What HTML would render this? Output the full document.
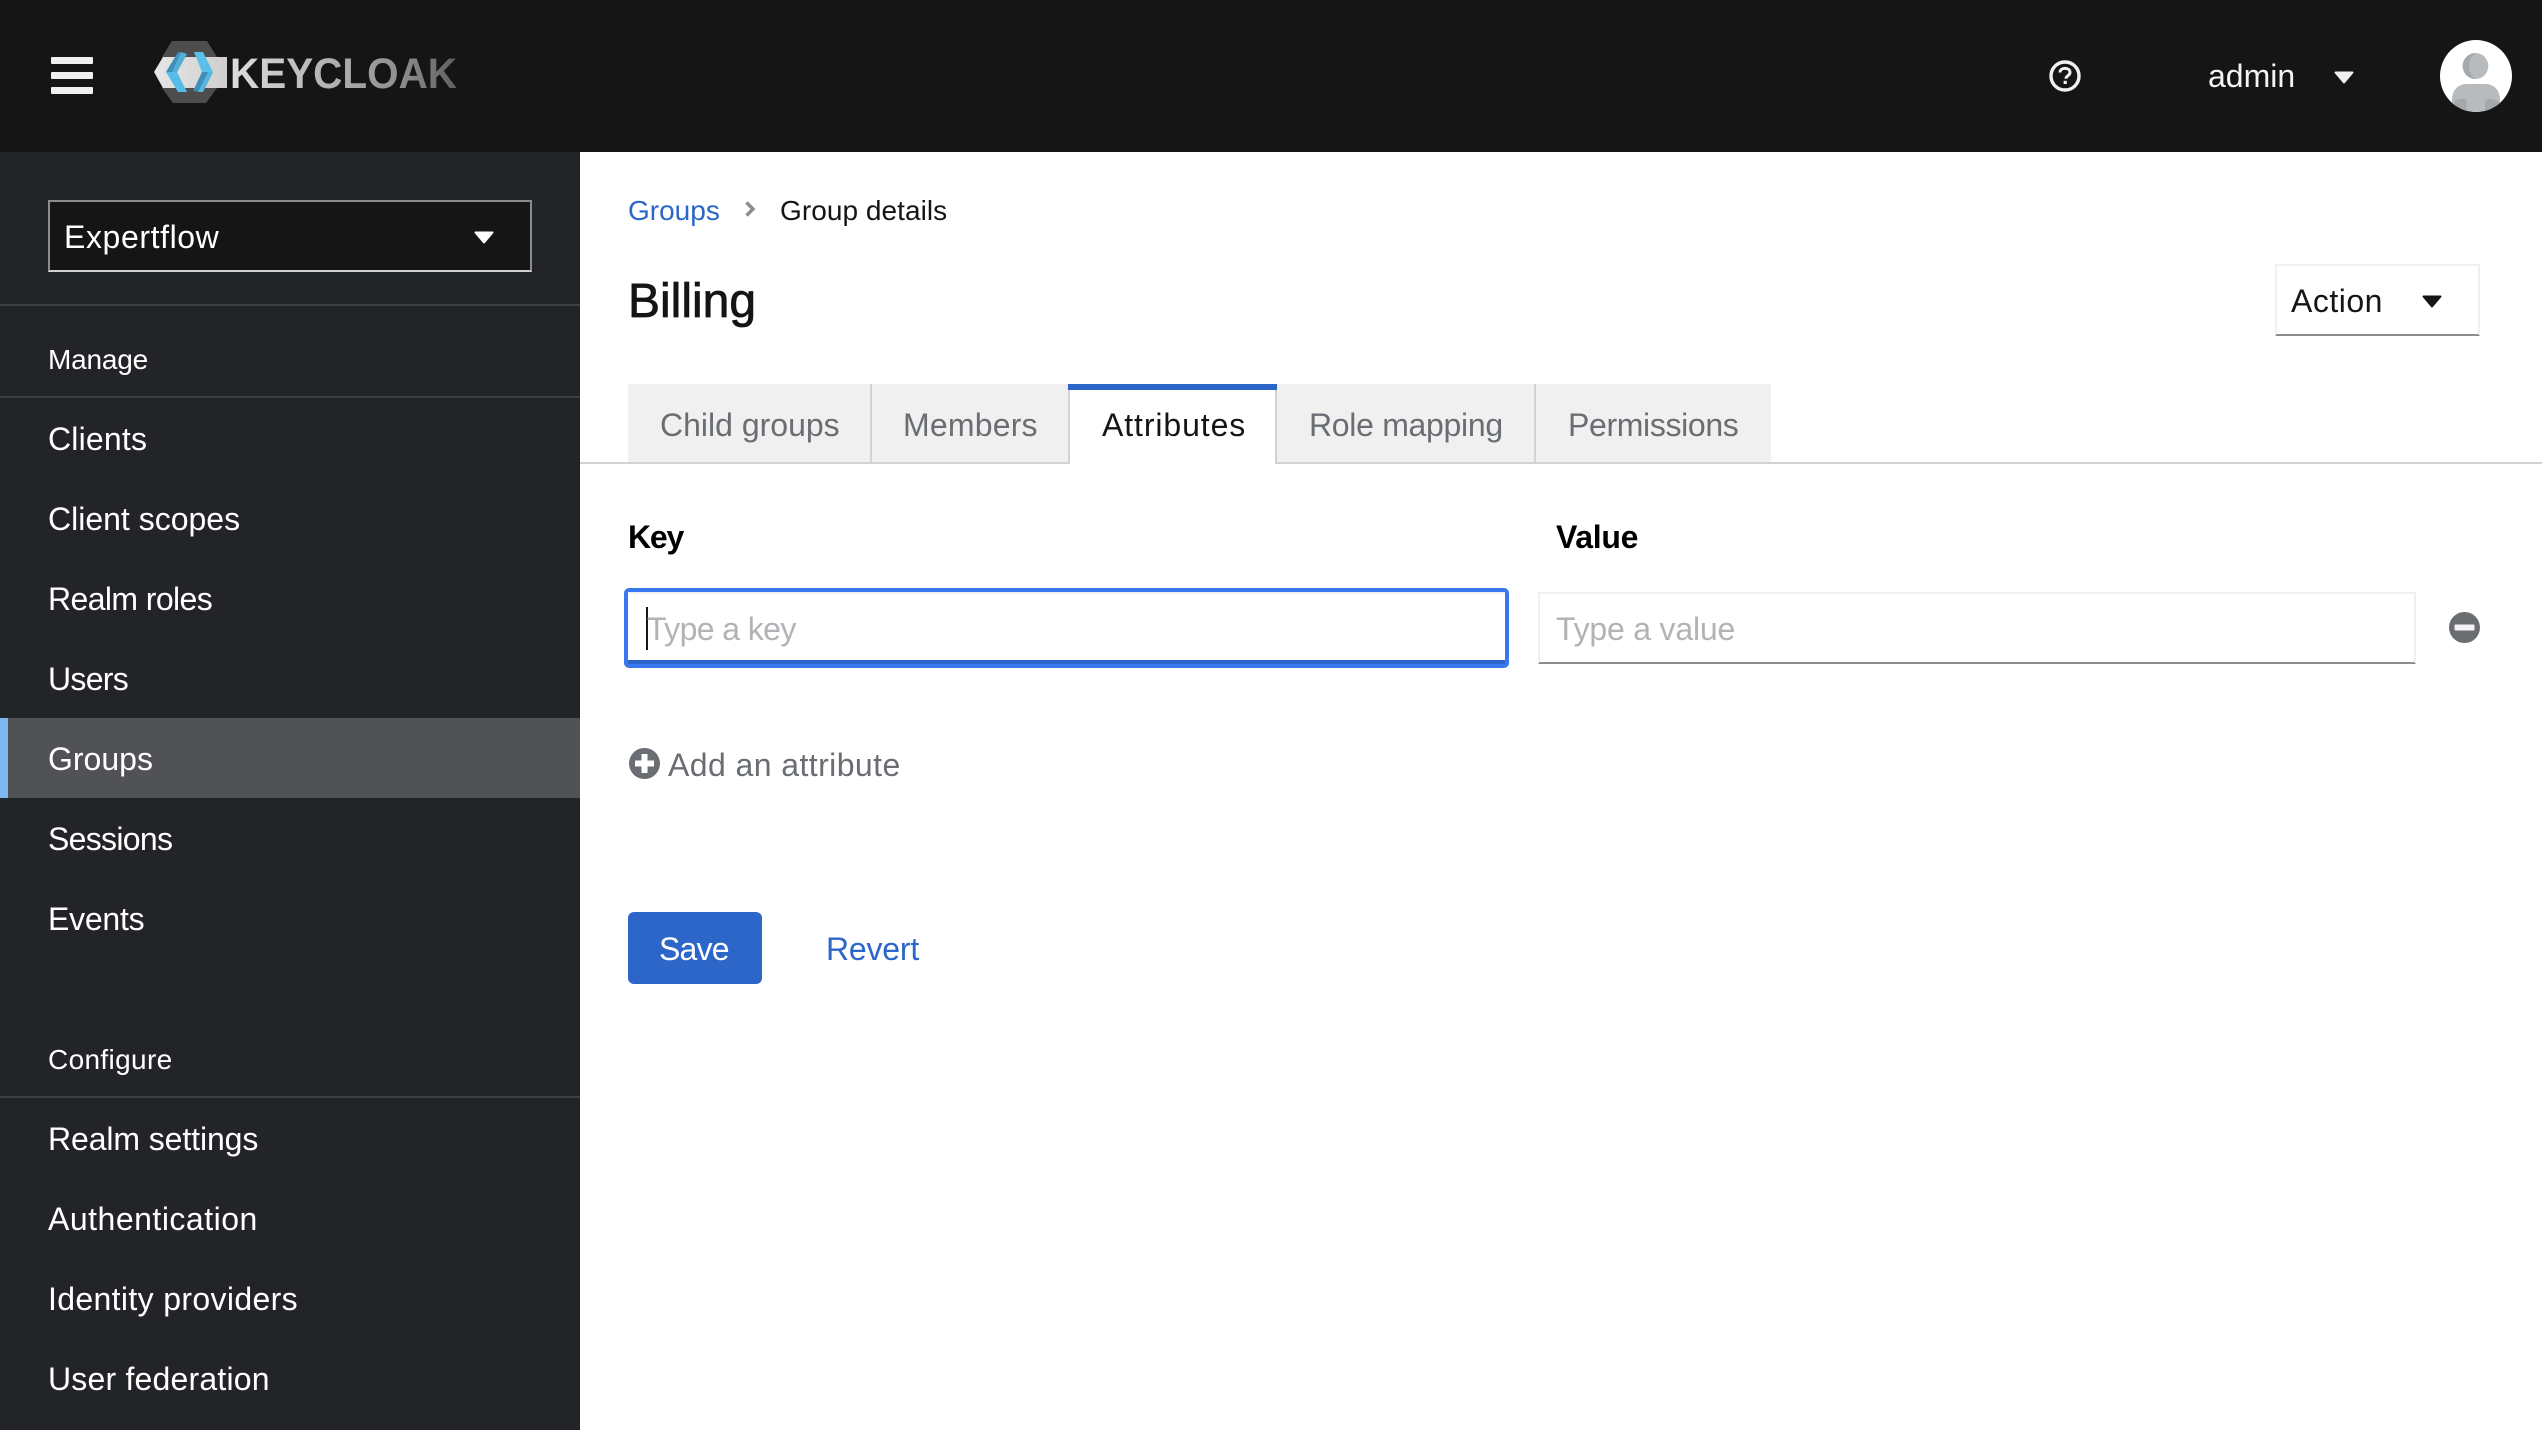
<!DOCTYPE html>
<html lang="en">
<head>
<meta charset="utf-8">
<title>Keycloak - Group details</title>
<style>
html,body{margin:0;padding:0;background:#fff}
body{position:relative;width:2542px;height:1430px;overflow:hidden;font-family:"Liberation Sans",sans-serif;color:#151515}
.a,.t{position:absolute;display:block}
.t{white-space:nowrap;font-size:32px;line-height:40px}
.s{font-size:28px;line-height:36px}
header{position:absolute;left:0;top:0;width:2542px;height:152px;background:#151515}
nav{position:absolute;left:0;top:152px;width:580px;height:1278px;background:#222428}
nav .t,header .t{color:#f4f4f4}
nav .t{color:#fff}
.g{color:#6a6e73}
.b{color:#2b66c8}
.ph{color:#b1b3b6}
svg{position:absolute;overflow:visible}
</style>
</head>
<body>
<header>
  <span class="a" style="left:51px;top:57px;width:42px;height:7px;background:#f0f0f0;border-radius:1px"></span>
  <span class="a" style="left:51px;top:72px;width:42px;height:7px;background:#f0f0f0;border-radius:1px"></span>
  <span class="a" style="left:51px;top:87px;width:42px;height:7px;background:#f0f0f0;border-radius:1px"></span>
  <svg style="left:0;top:0" width="500" height="152" viewBox="0 0 500 152">
    <defs>
      <linearGradient id="kg" x1="230" x2="457" y1="0" y2="0" gradientUnits="userSpaceOnUse">
        <stop offset="0" stop-color="#dedede"/><stop offset=".5" stop-color="#ababab"/><stop offset=".75" stop-color="#8e8e8e"/><stop offset="1" stop-color="#606060"/>
      </linearGradient>
      <linearGradient id="bg" x1="154" x2="228" y1="0" y2="0" gradientUnits="userSpaceOnUse">
        <stop offset="0" stop-color="#e6e6e6"/><stop offset="1" stop-color="#cfcfcf"/>
      </linearGradient>
    </defs>
    <polygon points="172,41 207,41 217,57 217,88 206,103 173,103 162,88 162,57" fill="#4d4d4d"/>
    <polygon points="154,72 163,57 227,57 227,88 163,88" fill="url(#bg)"/>
    <polygon points="178,52 187,54 177,72 166,72" fill="#3f8fb8"/>
    <polygon points="181,52 187,54 177,72 172,72" fill="#52aed8"/>
    <polygon points="166,72 177,72 187,92 178,92" fill="#56bce8"/>
    <polygon points="194,52 203,52 213,72 202,72" fill="#5ac0ea"/>
    <polygon points="202,72 213,72 203,92 193,91" fill="#3f8fb8"/>
    <polygon points="208,72 213,72 203,92 198,92" fill="#55b5df"/>
    <text x="230" y="88" font-family="Liberation Sans" font-weight="700" font-size="43" fill="url(#kg)" textLength="227" lengthAdjust="spacingAndGlyphs">KEYCLOAK</text>
  </svg>
  <svg style="left:2049px;top:60px" width="32" height="32" viewBox="0 0 32 32">
    <circle cx="16" cy="16" r="14" fill="none" stroke="#f0f0f0" stroke-width="3.4"/>
    <path d="M11 12.5C11 9.8 13.2 8.4 16 8.4s5 1.5 5 4c0 3.4-4 3.2-4.1 6.3" fill="none" stroke="#f0f0f0" stroke-width="3"/>
    <rect x="14.6" y="20.8" width="3.2" height="3.2" fill="#f0f0f0"/>
  </svg>
  <span class="t" style="left:2208px;top:56px">admin</span>
  <svg style="left:2334px;top:71px" width="20" height="13" viewBox="0 0 20 13"><path d="M1.5 1.5H18.5L10 11.5Z" fill="#f0f0f0" stroke="#f0f0f0" stroke-width="2" stroke-linejoin="round"/></svg>
  <svg style="left:2440px;top:40px" width="72" height="72" viewBox="0 0 72 72">
    <defs><clipPath id="ac"><circle cx="36" cy="36" r="36"/></clipPath></defs>
    <circle cx="36" cy="36" r="36" fill="#fff"/>
    <g clip-path="url(#ac)">
      <ellipse cx="35.5" cy="26" rx="12.8" ry="13" fill="#b8bbbe"/>
      <path d="M35.5 13C28.5 13 22.7 18.800 22.700 26S28.500 39 35.500 39C31 36 29 31 29 26S31 16 35.500 13Z" fill="#a6a8ab"/>
      <path d="M12 72V60C12 50 18 44 27 44H45C54 44 60 50 60 60V72Z" fill="#b8bbbe"/>
      <path d="M14 72V62C18 58 24 58 26.500 60V72ZM45 60C49 58 55 59 59 62V72H45Z" fill="#a6a8ab"/>
    </g>
  </svg>
</header>

<nav>
  <div class="a" style="left:48px;top:48px;width:484px;height:72px;box-sizing:border-box;background:#151515;border:2px solid #8a8d90;border-bottom-color:#d2d2d2"></div>
  <span class="t" style="left:64px;top:65px;letter-spacing:.6px">Expertflow</span>
  <svg style="left:474px;top:79px" width="20" height="13" viewBox="0 0 20 13"><path d="M1.500 1.500H18.500L10 11.500Z" fill="#fff" stroke="#fff" stroke-width="2" stroke-linejoin="round"/></svg>
  <div class="a" style="left:0;top:152px;width:580px;height:2px;background:#3c3f42"></div>
  <span class="t s" style="left:48px;top:190px;letter-spacing:-.2px">Manage</span>
  <div class="a" style="left:0;top:244px;width:580px;height:2px;background:#3c3f42"></div>
  <span class="t" style="left:48px;top:267px;letter-spacing:.2px">Clients</span>
  <span class="t" style="left:48px;top:347px">Client scopes</span>
  <span class="t" style="left:48px;top:427px;letter-spacing:-.6px">Realm roles</span>
  <span class="t" style="left:48px;top:507px;letter-spacing:-.7px">Users</span>
  <div class="a" style="left:0;top:566px;width:580px;height:80px;background:#515256"></div>
  <div class="a" style="left:0;top:566px;width:8px;height:80px;background:#7eb8f2"></div>
  <span class="t" style="left:48px;top:587px">Groups</span>
  <span class="t" style="left:48px;top:667px;letter-spacing:-.7px">Sessions</span>
  <span class="t" style="left:48px;top:747px;letter-spacing:-.25px">Events</span>
  <span class="t s" style="left:48px;top:890px;letter-spacing:.35px">Configure</span>
  <div class="a" style="left:0;top:944px;width:580px;height:2px;background:#3c3f42"></div>
  <span class="t" style="left:48px;top:967px;letter-spacing:-.1px">Realm settings</span>
  <span class="t" style="left:48px;top:1047px;letter-spacing:.5px">Authentication</span>
  <span class="t" style="left:48px;top:1127px;letter-spacing:.35px">Identity providers</span>
  <span class="t" style="left:48px;top:1207px;letter-spacing:.2px">User federation</span>
</nav>

<main>
  <a class="t s b" style="left:628px;top:193px">Groups</a>
  <svg style="left:744px;top:200px" width="12" height="18" viewBox="0 0 12 18"><path d="M2.500 2.500L9 9L2.500 15.500" fill="none" stroke="#8a8d90" stroke-width="3.400"/></svg>
  <span class="t s" style="left:780px;top:193px;letter-spacing:.05px">Group details</span>
  <h1 class="t" style="margin:0;left:628px;top:272px;font-size:48px;line-height:60px;font-weight:400;-webkit-text-stroke:.8px #151515">Billing</h1>

  <div class="a" style="left:2275px;top:264px;width:205px;height:72px;box-sizing:border-box;border:2px solid #f0f0f0;border-bottom-color:#8a8d90"></div>
  <span class="t" style="left:2291px;top:281px;letter-spacing:.5px">Action</span>
  <svg style="left:2422px;top:295px" width="20" height="13" viewBox="0 0 20 13"><path d="M1.500 1.500H18.500L10 11.500Z" fill="#151515" stroke="#151515" stroke-width="2" stroke-linejoin="round"/></svg>

  <div class="a" style="top:462px;left:580px;width:1962px;height:2px;background:#d2d2d2"></div>
  <div class="a" style="left:628px;top:384px;width:648px;height:78px;background:#f0f0f0"></div>
  <div class="a" style="left:1276px;top:384px;width:495px;height:78px;background:#f0f0f0"></div>
  <div class="a" style="left:870px;top:384px;width:2px;height:78px;background:#d2d2d2"></div>
  <div class="a" style="left:1068px;top:384px;width:209px;height:80px;background:#fff;box-sizing:border-box;border-left:2px solid #d2d2d2;border-right:2px solid #d2d2d2"></div>
  <div class="a" style="left:1068px;top:384px;width:209px;height:6px;background:#2b66c8"></div>
  <div class="a" style="left:1534px;top:384px;width:2px;height:78px;background:#d2d2d2"></div>
  <span class="t g" style="left:660px;top:405px">Child groups</span>
  <span class="t g" style="left:903px;top:405px;letter-spacing:.2px">Members</span>
  <span class="t" style="left:1102px;top:405px;letter-spacing:.9px">Attributes</span>
  <span class="t g" style="left:1309px;top:405px;letter-spacing:-.3px">Role mapping</span>
  <span class="t g" style="left:1568px;top:405px;letter-spacing:-.35px">Permissions</span>

  <b class="t" style="left:628px;top:517px;letter-spacing:-1.200px;color:#000">Key</b>
  <b class="t" style="left:1556px;top:517px;letter-spacing:-.3px;color:#000">Value</b>

  <div class="a" style="left:624px;top:588px;width:885px;height:80px;box-sizing:border-box;border:4px solid #3a78f0;border-bottom-width:4px;border-radius:5px"></div>
  <div class="a" style="left:628px;top:592px;width:877px;height:2px;background:#f0f0f0"></div>
  <div class="a" style="left:628px;top:660px;width:877px;height:4px;background:#2b66c8"></div>
  <div class="a" style="left:646px;top:607px;width:2px;height:43px;background:#151515"></div>
  <span class="t ph" style="left:647px;top:609px;letter-spacing:-.6px">Type a key</span>

  <div class="a" style="left:1538px;top:592px;width:878px;height:72px;box-sizing:border-box;border:2px solid #f0f0f0;border-bottom-color:#8a8d90"></div>
  <span class="t ph" style="left:1556px;top:609px;letter-spacing:-.2px">Type a value</span>
  <svg style="left:2449px;top:612px" width="31" height="31" viewBox="0 0 31 31"><circle cx="15.500" cy="15.500" r="15.500" fill="#6a6e73"/><rect x="5.500" y="12.500" width="20" height="6" rx="1" fill="#f4f4f4"/></svg>

  <svg style="left:629px;top:748px" width="31" height="31" viewBox="0 0 31 31"><circle cx="15.500" cy="15.500" r="15.500" fill="#6a6e73"/><path d="M6 15.500H25M15.500 6V25" stroke="#fff" stroke-width="6"/></svg>
  <span class="t g" style="left:668px;top:745px;letter-spacing:.42px">Add an attribute</span>

  <div class="a" style="left:628px;top:912px;width:134px;height:72px;background:#2b66c8;border-radius:6px"></div>
  <span class="t" style="left:659px;top:929px;color:#fff;letter-spacing:-.8px">Save</span>
  <a class="t b" style="left:826px;top:929px;letter-spacing:-.2px">Revert</a>
</main>
</body>
</html>
